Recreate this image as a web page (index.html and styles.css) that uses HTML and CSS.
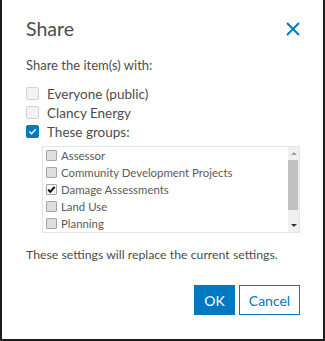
FILE: index.html
```html
<!DOCTYPE html>
<html>
<head>
<meta charset="utf-8">
<link rel="stylesheet" href="styles.css">
</head>
<body>
<div class="dialog">
  <div class="header">
    <h1 class="title">Share</h1>
    <button class="close" aria-label="Close">
      <svg width="14" height="14" viewBox="0 0 14 14"><path d="M1 1 L13 13 M13 1 L1 13" stroke="#0079c1" stroke-width="2" fill="none"/></svg>
    </button>
  </div>
  <p class="lead">Share the item(s) with:</p>
  <ul class="options">
    <li class="opt"><span class="cb"></span><span>Everyone (public)</span></li>
    <li class="opt"><span class="cb"></span><span>Clancy Energy</span></li>
    <li class="opt"><span class="cb checked"><svg width="13" height="13" viewBox="0 0 13 13"><path d="M3.3 6.6 L5.5 8.8 L9.8 4.3" stroke="#fff" stroke-width="1.4" fill="none"/></svg></span><span>These groups:</span></li>
  </ul>
  <div class="listbox">
    <ul class="groups">
      <li class="grp"><span class="gcb"></span><span>Assessor</span></li>
      <li class="grp"><span class="gcb"></span><span>Community Development Projects</span></li>
      <li class="grp"><span class="gcb on"><svg width="11" height="11" viewBox="0 0 11 11"><path d="M2.2 5.6 L4.3 7.9 L8.6 2.8" stroke="#000" stroke-width="1.8" fill="none"/></svg></span><span>Damage Assessments</span></li>
      <li class="grp"><span class="gcb"></span><span>Land Use</span></li>
      <li class="grp"><span class="gcb"></span><span>Planning</span></li>
    </ul>
    <div class="scrollbar">
      <span class="arrow up"></span>
      <span class="track"><span class="thumb"></span></span>
      <span class="arrow down"></span>
    </div>
  </div>
  <p class="note">These settings will replace the current settings.</p>
  <div class="actions">
    <button class="btn primary">OK</button>
    <button class="btn secondary">Cancel</button>
  </div>
</div>
</body>
</html>
```
FILE: styles.css
```css
* { box-sizing: border-box; }
html, body { margin: 0; padding: 0; background: #fff; }
body { font-family: Lato, "Open Sans", sans-serif; color: #4c4c4c; }

.dialog {
  width: 325px;
  height: 341px;
  border: 2px solid #1e1e1e;
  border-top: 0;
  padding: 0 23px 0 24px;
  display: flex;
  flex-direction: column;
}

.header {
  display: flex;
  justify-content: space-between;
  align-items: flex-start;
  margin-top: 17px;
}
.title {
  margin: 0;
  font-size: 19.5px;
  line-height: 24px;
  font-weight: 400;
  color: #4c4c4c;
}
.close {
  border: 0;
  background: none;
  padding: 0;
  margin-top: 5px;
  width: 14px;
  height: 14px;
  display: block;
}
.close svg { display: block; }

.lead {
  margin: 16px 0 0 0;
  font-size: 13px;
  line-height: 16px;
}

.options {
  list-style: none;
  margin: 11px 0 0 0;
  padding: 0;
}
.opt {
  display: flex;
  align-items: center;
  height: 19px;
  font-size: 13.5px;
  gap: 8px;
}
.cb {
  width: 13px;
  height: 13px;
  border: 1px solid #d2d2d2;
  background: #f3f3f3;
  border-radius: 2px;
  flex: none;
}
.cb.checked {
  background: #0079c1;
  border-color: #0079c1;
  position: relative;
}
.cb.checked svg { position: absolute; left: -1px; top: -1px; }

.listbox {
  margin: 5px 0 0 16px;
  height: 87px;
  border: 1px solid #e4e4e4;
  display: flex;
}
.groups {
  list-style: none;
  margin: 0;
  padding: 0 0 0 3px;
  flex: 1;
}
.grp {
  display: flex;
  align-items: center;
  height: 17px;
  font-size: 11.4px;
  color: #5a5a5a;
  gap: 4px;
}
.gcb {
  width: 11px;
  height: 11px;
  border: 1px solid #a6a6a6;
  background: #dedede;
  border-radius: 1px;
  flex: none;
  position: relative;
}
.gcb.on { background: #f6f6f6; }
.gcb.on svg { position: absolute; left: -1px; top: -1px; }

.scrollbar {
  width: 11px;
  background: #f0f0f0;
  display: flex;
  flex-direction: column;
  align-items: center;
}
.arrow {
  height: 13px;
  width: 11px;
  display: flex;
  align-items: center;
  justify-content: center;
  flex: none;
}
.arrow::before {
  content: "";
  border-left: 3px solid transparent;
  border-right: 3px solid transparent;
}
.arrow.up::before { border-bottom: 3px solid #a0a0a0; }
.arrow.down::before { border-top: 3px solid #333; }
.track { flex: 1; width: 11px; display: flex; flex-direction: column; }
.thumb { display: block; height: 50px; background: #c1c1c1; width: 10px; }

.note {
  margin: 14px 0 0 0;
  font-size: 12.3px;
  line-height: 16px;
}

.actions {
  display: flex;
  justify-content: flex-end;
  gap: 4px;
  margin-top: 22px;
}
.btn {
  height: 30px;
  font-family: Lato, "Open Sans", sans-serif;
  font-size: 14px;
  border: 1px solid #0079c1;
  padding: 0;
}
.primary { width: 41px; background: #0079c1; color: #fff; }
.secondary { width: 61px; background: #fff; color: #0079c1; }
```
